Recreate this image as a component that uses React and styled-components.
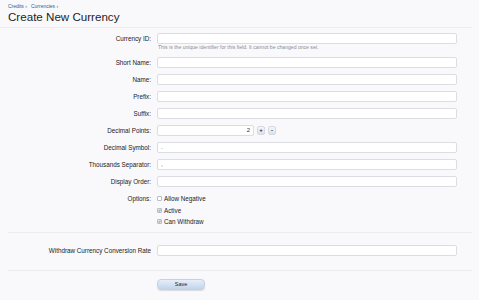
import React from "react";
import styled, { createGlobalStyle } from "styled-components";

const Global = createGlobalStyle`
  html, body { margin: 0; padding: 0; background: #f9f9fc; }
  body { font-family: "Liberation Sans", Arial, sans-serif; color: #222; }
`;

const Page = styled.div`
  width: 479px;
  height: 300px;
  overflow: hidden;
  background: #f9f9fc;
`;

const Header = styled.div`
  padding: 3px 8px 0 8px;
  margin-right: 7px;
  border-bottom: 1px solid #ececf1;
  height: 24px;
`;

const Crumbs = styled.div`
  display: flex;
  gap: 4px;
  font-size: 5px;
  line-height: 6px;
  color: #2f5a92;
`;

const Title = styled.h1`
  margin: 0;
  font-size: 11.6px;
  line-height: 16px;
  font-weight: normal;
  color: #1d1d24;
`;

const Form = styled.div`
  display: flex;
  flex-direction: column;
  padding-top: 5px;
`;

const Row = styled.div`
  display: grid;
  grid-template-columns: 151px 300px;
  column-gap: 6px;
  margin-bottom: 6px;
`;

const Label = styled.div`
  text-align: right;
  font-size: 6.3px;
  line-height: 11px;
  color: #222;
`;

const Field = styled.div`
  display: flex;
  flex-direction: column;
`;

const Input = styled.div`
  box-sizing: border-box;
  height: 11px;
  width: ${(p) => p.$w || 300}px;
  background: #fff;
  border: 1px solid #dcdce3;
  border-radius: 2px;
  font-size: 6px;
  line-height: 9px;
  padding: 0 3px;
  text-align: ${(p) => (p.$right ? "right" : "left")};
  color: #333;
`;

const Hint = styled.div`
  font-size: 5.1px;
  line-height: 7px;
  color: #8a8a95;
  padding-left: 1px;
`;

const SpinRow = styled.div`
  display: flex;
  align-items: center;
  gap: 3px;
`;

const SpinButton = styled.div`
  box-sizing: border-box;
  width: 8px;
  height: 9px;
  border-radius: 2px;
  border: 1px solid #d6d9e2;
  background: linear-gradient(#f3f5f9, #dde2ea);
  font-size: 6px;
  line-height: 7px;
  text-align: center;
  color: #333;
  font-weight: bold;
`;

const Options = styled.div`
  display: flex;
  flex-direction: column;
`;

const Option = styled.label`
  display: flex;
  align-items: center;
  gap: 2px;
  font-size: 6.3px;
  line-height: 11.5px;
  color: #222;
`;

const Box = styled.span`
  box-sizing: border-box;
  width: 5px;
  height: 5px;
  border: 1px solid #b8bcc6;
  border-radius: 1px;
  background: ${(p) => (p.$on ? "#dfe3ea" : "#fff")};
  display: inline-flex;
  align-items: center;
  justify-content: center;
  font-size: 4px;
  line-height: 3px;
  color: #555;
`;

const Divider = styled.div`
  height: 1px;
  background: #ececf1;
  margin: ${(p) => p.$m};
`;

const SaveRow = styled.div`
  display: grid;
  grid-template-columns: 151px auto;
  column-gap: 6px;
`;

const SaveButton = styled.div`
  box-sizing: border-box;
  width: 48px;
  height: 11px;
  border-radius: 4px;
  border: 1px solid #c3d1e3;
  background: linear-gradient(#e6eefa, #c2d4ea);
  box-shadow: 0 1px 1px rgba(0, 0, 0, 0.12);
  font-size: 5.5px;
  line-height: 9px;
  text-align: center;
  color: #222;
`;

const TextRow = ({ label, value, right, w, children }) => (
  <Row>
    <Label>{label}</Label>
    <Field>
      <Input $right={right} $w={w}>{value}</Input>
      {children}
    </Field>
  </Row>
);

export default function App() {
  return (
    <Page>
      <Global />
      <Header>
        <Crumbs>
          <span>Credits ›</span>
          <span>Currencies ›</span>
        </Crumbs>
        <Title>Create New Currency</Title>
      </Header>
      <Form>
        <TextRow label="Currency ID:">
          <Hint>This is the unique identifier for this field. It cannot be changed once set.</Hint>
        </TextRow>
        <TextRow label="Short Name:" />
        <TextRow label="Name:" />
        <TextRow label="Prefix:" />
        <TextRow label="Suffix:" />
        <Row>
          <Label>Decimal Points:</Label>
          <SpinRow>
            <Input $w={97} $right>2</Input>
            <SpinButton>+</SpinButton>
            <SpinButton>-</SpinButton>
          </SpinRow>
        </Row>
        <TextRow label="Decimal Symbol:" value="." />
        <TextRow label="Thousands Separator:" value="," />
        <TextRow label="Display Order:" />
        <Row>
          <Label>Options:</Label>
          <Options>
            <Option><Box />Allow Negative</Option>
            <Option><Box $on>✓</Box>Active</Option>
            <Option><Box $on>✓</Box>Can Withdraw</Option>
          </Options>
        </Row>
        <Divider $m="-2px 7px 12px 8px" />
        <TextRow label="Withdraw Currency Conversion Rate" />
        <Divider $m="8px 7px 8px 8px" />
        <SaveRow>
          <span />
          <SaveButton>Save</SaveButton>
        </SaveRow>
      </Form>
    </Page>
  );
}
